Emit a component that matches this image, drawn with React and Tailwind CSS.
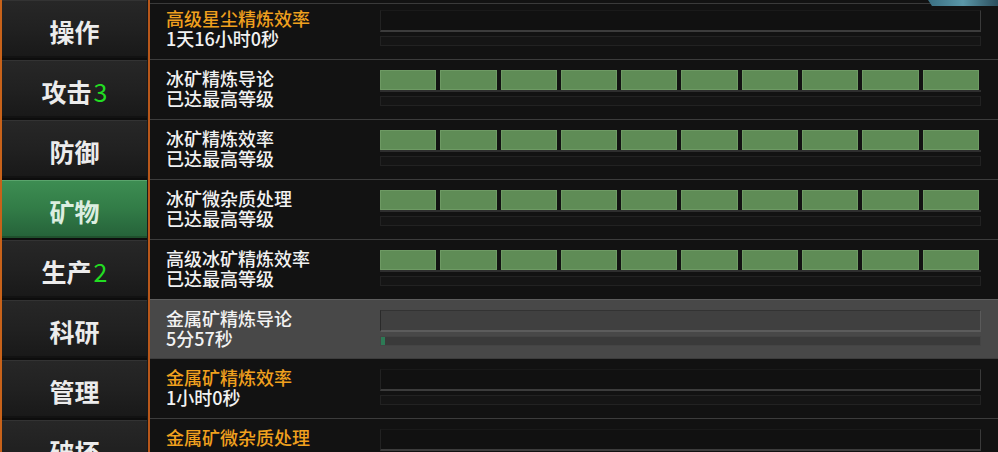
import React from "react";

const FONT = { fontFamily: '"Noto Sans CJK SC", "Noto Sans", sans-serif' };

const tabs = [
  { label: "操作" },
  { label: "攻击", badge: "3" },
  { label: "防御" },
  { label: "矿物", active: true },
  { label: "生产", badge: "2" },
  { label: "科研" },
  { label: "管理" },
  { label: "破坏" },
];

const rows = [
  { title: "高级星尘精炼效率", sub: "1天16小时0秒", orange: true, max: false },
  { title: "冰矿精炼导论", sub: "已达最高等级", max: true },
  { title: "冰矿精炼效率", sub: "已达最高等级", max: true },
  { title: "冰矿微杂质处理", sub: "已达最高等级", max: true },
  { title: "高级冰矿精炼效率", sub: "已达最高等级", max: true },
  { title: "金属矿精炼导论", sub: "5分57秒", active: true },
  { title: "金属矿精炼效率", sub: "1小时0秒", orange: true },
  { title: "金属矿微杂质处理", sub: "", orange: true },
];

function Tab({ t }) {
  const base = t.active
    ? "bg-gradient-to-b from-[#3d8d52] via-[#327c47] to-[#26633a] text-[#dceee0] border-t border-[#5aa46c] border-b-2 border-b-[#1f4f2c]"
    : "bg-gradient-to-b from-[#272727] via-[#212121] to-[#191919] text-[#ececec] border-t border-[#333333] border-b-2 border-b-[#121212]";
  return (
    <div
      className={`h-[58px] shrink-0 flex items-center justify-center pt-[5px] text-[25px] font-bold leading-none ${base}`}
    >
      <span>{t.label}</span>
      {t.badge && <span className="text-[#22dd22] font-normal ml-[2px]">{t.badge}</span>}
    </div>
  );
}

function TopBar({ max, active }) {
  if (max) {
    return (
      <div className="h-[20px] flex gap-[4px] border-b-2 border-[#2e2e2e] pr-[2px] box-content">
        {Array.from({ length: 10 }).map((_, i) => (
          <div key={i} className="flex-1 bg-[#5f8c56] border border-[#6e9a64]" />
        ))}
      </div>
    );
  }
  return (
    <div
      className={`h-[19px] border-l border-t border-r box-content border-b-2 ${
        active
          ? "bg-[#404040] border-l-[#2a2a2a] border-t-[#333333] border-r-[#5a5a5a] border-b-[#5c5c5c]"
          : "bg-[#111111] border-l-[#222222] border-t-[#1a1a1a] border-r-[#3a3a3a] border-b-[#3c3c3c]"
      }`}
    />
  );
}

function BottomBar({ active }) {
  return (
    <div
      className={`h-[10px] mt-[4px] border ${
        active ? "bg-[#3a3a3a] border-[#444444]" : "bg-[#151515] border-[#222222]"
      } flex`}
    >
      {active && <div className="w-[4px] h-full bg-[#2d7a55]" />}
    </div>
  );
}

function Row({ r }) {
  const bg = r.active ? "bg-[#484848]" : "bg-[#121212]";
  const titleColor = r.orange ? "text-[#f0a01e]" : "text-[#f2f2f2]";
  return (
    <div
      className={`h-[60px] shrink-0 flex items-start border-b border-[#3c3c3c] ${bg} ${
        r.active ? "border-t border-t-[#5e5e5e] -mt-px" : ""
      }`}
    >
      <div className="w-[214px] pl-[16px] pt-[8px] text-[18px] font-medium">
        <div className={`h-[20px] leading-[20px] whitespace-nowrap ${titleColor}`}>{r.title}</div>
        <div className="h-[20px] leading-[20px] whitespace-nowrap text-[#f2f2f2]">{r.sub}</div>
      </div>
      <div className="w-[601px] ml-[16px] pt-[10px]">
        <TopBar max={r.max} active={r.active} />
        <BottomBar active={r.active} />
      </div>
    </div>
  );
}

export default function App() {
  return (
    <div className="w-[998px] h-[452px] overflow-hidden bg-[#0c0c0c] flex relative" style={FONT}>
      {/* sidebar */}
      <div className="w-[150px] h-full flex shrink-0">
        <div className="w-[2px] h-full bg-[#c8621a]" />
        <div className="w-[145px] flex flex-col gap-[2px] bg-[#0d0d0d]">
          {tabs.map((t, i) => (
            <Tab key={i} t={t} />
          ))}
        </div>
        <div className="w-[1px] h-full bg-[#1a1a1a]" />
        <div className="w-[2px] h-full bg-[#b8571a]" />
      </div>
      {/* content */}
      <div className="flex-1 h-full flex flex-col bg-[#121212] relative">
        <div className="absolute left-0 right-0 top-[3px] h-px bg-[#3a3a3a]" />
        {rows.map((r, i) => (
          <Row key={i} r={r} />
        ))}
      </div>
      {/* top-right ornament */}
      <div className="absolute top-0 right-0 w-[70px] h-[6px] bg-gradient-to-r from-[#3a6f82] via-[#5a97a8] to-[#2c4f5e] [clip-path:polygon(0_0,100%_0,100%_100%,4px_100%)]" />
    </div>
  );
}
